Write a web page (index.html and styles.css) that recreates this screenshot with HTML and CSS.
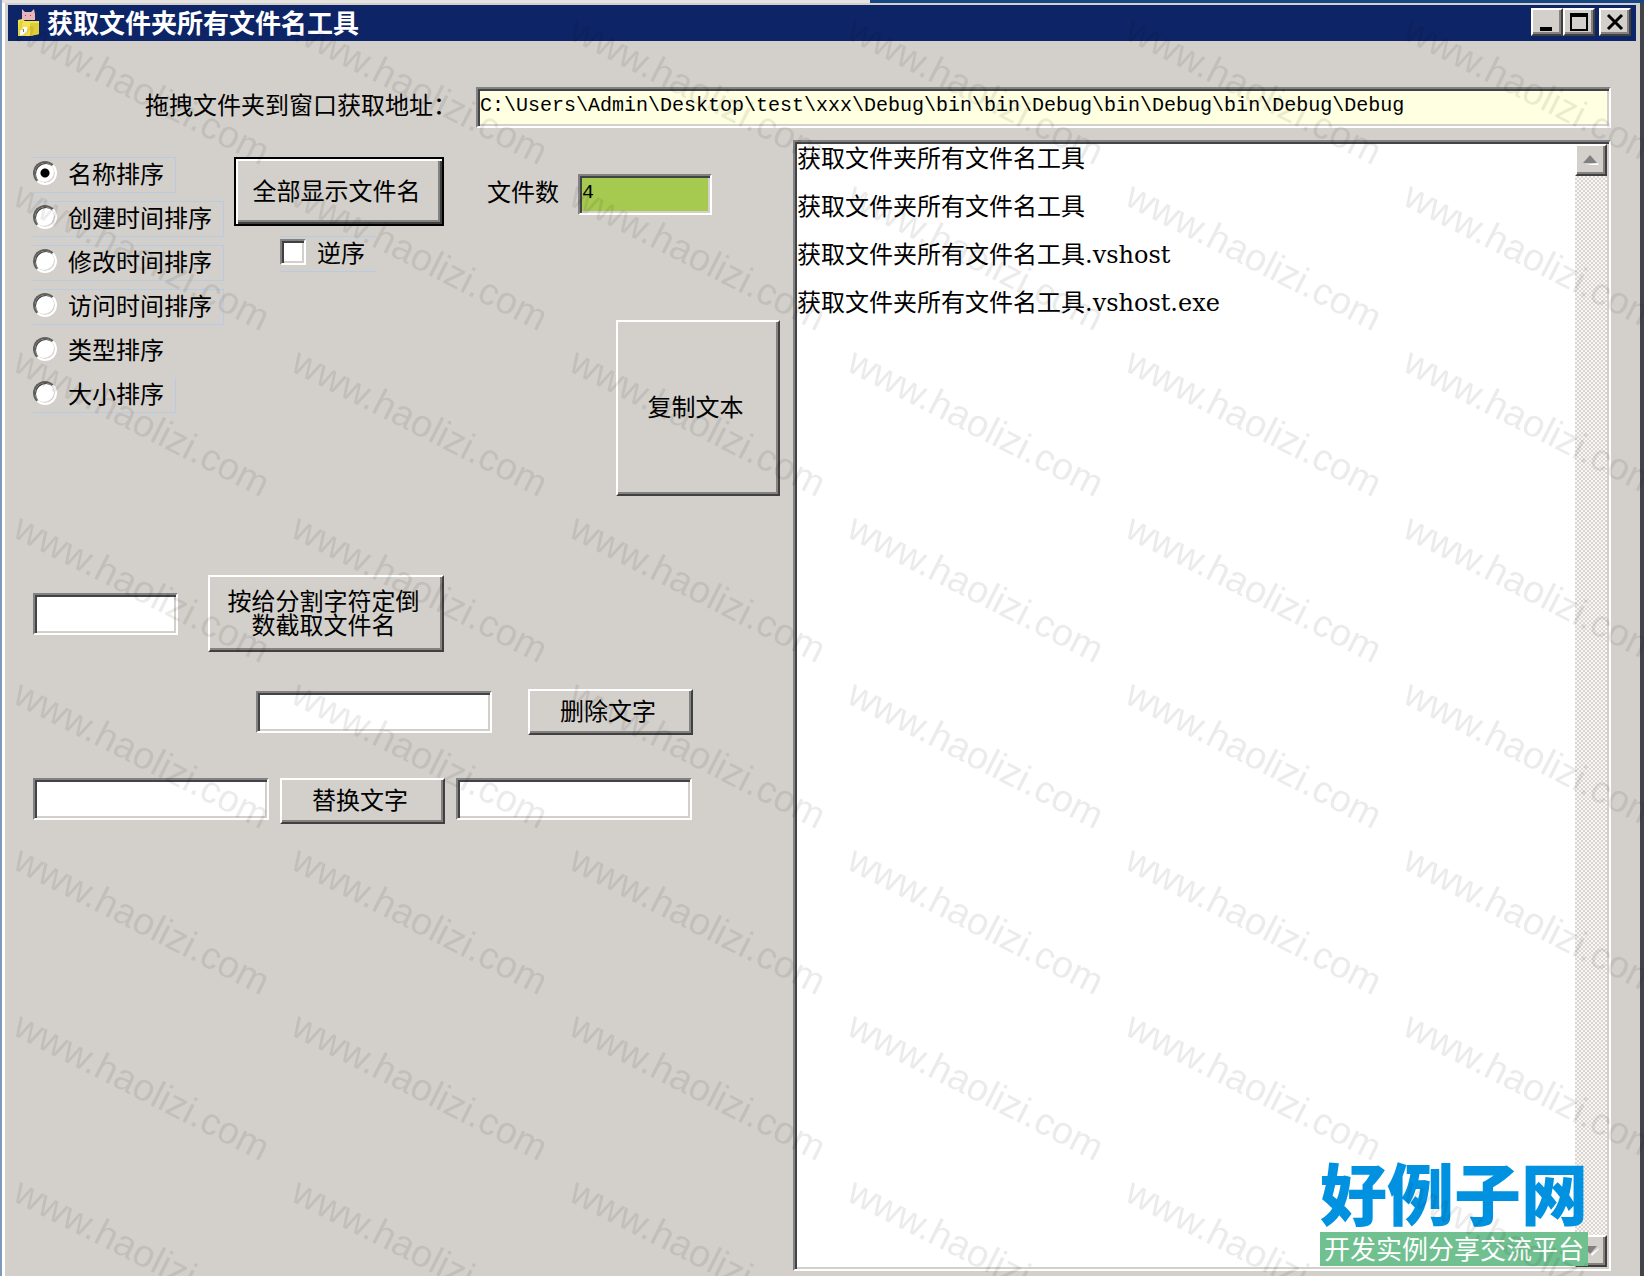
FILE: index.html
```html
<!DOCTYPE html>
<html lang="zh-CN">
<head>
    <meta charset="UTF-8">
    <meta name="viewport" content="width=device-width, initial-scale=1.0">
    <title>获取文件夹所有文件名工具</title>
    <link rel="stylesheet" href="styles.css">
</head>
<body>
    <div class="window">
        <header class="titlebar">
            <svg class="app-icon" width="22" height="28" viewBox="0 0 22 28">
                <path d="M4 0l3 3h6l3-3 1 5v6H4z" fill="#e9b5bd"/>
                <path d="M7 6h1v1H7zM12 6h1v1h-1z" fill="#8c4a5c"/>
                <path d="M0 11l4-1 3 2h14v13l-9 2H0z" fill="#f3e34c"/>
                <path d="M12 14h9v11l-9 2z" fill="#e2cc35"/>
                <path d="M2 21h3v-3h4v5l-4 3H2z" fill="#fff"/>
                <path d="M5 20h1v3H5z" fill="#77808c"/>
            </svg>
            <h1>获取文件夹所有文件名工具</h1>
            <div class="title-buttons">
                <button class="raised" aria-label="最小化">
                    <svg width="26" height="22" viewBox="0 0 26 22"><path d="M6 16h12v4H6z"/></svg>
                </button>
                <button class="raised" aria-label="最大化">
                    <svg width="26" height="22" viewBox="0 0 26 22"><path d="M4 2h18v18H4zM6 6v12h14V6z" fill-rule="evenodd"/></svg>
                </button>
                <button class="raised close" aria-label="关闭">
                    <svg width="26" height="22" viewBox="0 0 26 22"><path d="M6 4l14 14M20 4L6 18" stroke="#000" stroke-width="3"/></svg>
                </button>
            </div>
        </header>

        <main>
            <div class="path-row">
                <label for="path">拖拽文件夹到窗口获取地址：</label>
                <input type="text" id="path" class="sunken" value="C:\Users\Admin\Desktop\test\xxx\Debug\bin\bin\Debug\bin\Debug\bin\Debug\Debug">
            </div>

            <div class="content">
                <section class="tools">
                    <div class="options">
                        <div class="sort-list">
                            <label class="marked short"><input type="radio" name="sort" checked>名称排序</label>
                            <label class="marked"><input type="radio" name="sort">创建时间排序</label>
                            <label class="marked"><input type="radio" name="sort">修改时间排序</label>
                            <label class="marked"><input type="radio" name="sort">访问时间排序</label>
                            <label><input type="radio" name="sort">类型排序</label>
                            <label class="marked short open-top"><input type="radio" name="sort">大小排序</label>
                        </div>
                        <div class="show">
                            <button class="raised default">全部显示文件名</button>
                            <label class="reverse"><input type="checkbox">逆序</label>
                        </div>
                        <div class="result">
                            <div class="count-row">
                                <label for="count">文件数</label>
                                <input type="text" id="count" class="sunken" value="4">
                            </div>
                            <button class="raised copy">复制文本</button>
                        </div>
                    </div>

                    <div class="split-row">
                        <input type="text" class="sunken" aria-label="分割字符">
                        <button class="raised">按给分割字符定倒<br>数截取文件名</button>
                    </div>

                    <div class="delete-row">
                        <input type="text" class="sunken" aria-label="要删除的文字">
                        <button class="raised">删除文字</button>
                    </div>

                    <div class="replace-row">
                        <input type="text" class="sunken" aria-label="原文字">
                        <button class="raised">替换文字</button>
                        <input type="text" class="sunken" aria-label="新文字">
                    </div>
                </section>

                <section class="file-list sunken">
                    <textarea aria-label="文件名" spellcheck="false">获取文件夹所有文件名工具

获取文件夹所有文件名工具

获取文件夹所有文件名工具.vshost

获取文件夹所有文件名工具.vshost.exe</textarea>
                    <div class="scrollbar">
                        <button class="raised" aria-label="向上滚动">
                            <svg width="16" height="10" viewBox="0 0 16 10"><path d="M3 10h13l-2-2z" fill="#fff"/><path d="M0 8l7-8 7 8z" fill="#808080"/></svg>
                        </button>
                        <button class="raised" aria-label="向下滚动">
                            <svg width="16" height="10" viewBox="0 0 16 10"><path d="M16 2v1L9 10 8 8z" fill="#fff"/><path d="M0 0h14L7 8z" fill="#808080"/></svg>
                        </button>
                    </div>
                </section>
            </div>
        </main>
    </div>

    <div class="site-logo">
        <strong>好例子网</strong>
        <span>开发实例分享交流平台</span>
    </div>

    <svg class="watermark" width="100%" height="100%" aria-hidden="true">
        <defs>
            <pattern id="mark" width="278" height="166" y="16" patternUnits="userSpaceOnUse">
                <text x="11" y="22" transform="rotate(27 11 22)">www.haolizi.com</text>
            </pattern>
        </defs>
        <rect width="100%" height="100%" fill="url(#mark)"/>
    </svg>
</body>
</html>
```

FILE: styles.css
```css
* {
    box-sizing: border-box;
}
body {
    margin: 0;
    height: 100vh;
    padding: 3px 0 0 2px;
    overflow: hidden;
    background: linear-gradient(90deg, #7a9ac0 2px, #e4e3df 2px, #e4e3df 870px, #174684 870px);
    font-family: "Noto Sans CJK SC", sans-serif;
    font-size: 24px;
    color: #000;
    position: relative;
}
button, input, textarea {
    font: inherit;
    color: inherit;
    margin: 0;
    border-radius: 0;
}
.window {
    display: flex;
    flex-direction: column;
    height: 100%;
    padding: 2px 4px 0 3px;
    background: #d3cfca;
    border-left: 3px solid #fff;
    border-right: 4px solid #404448;
}
.raised {
    display: flex;
    align-items: center;
    justify-content: center;
    padding: 0;
    background: #d3cfca;
    border: 2px solid;
    border-color: #fff #404040 #404040 #fff;
    box-shadow: inset -2px -2px #848280;
    line-height: 24px;
}
.tools .raised {
    padding: 0 5px 4px 0;
}
.sunken {
    border: 2px solid;
    border-color: #848280 #fff #fff #848280;
    box-shadow: inset 2px 2px #404448, inset -2px -2px #d3cfca;
    background: #fff;
}

/* title bar */
.titlebar {
    display: flex;
    align-items: center;
    height: 36px;
    padding: 0 5px 0 10px;
    background: #0d2466;
    color: #fff;
}
.titlebar h1 {
    flex: 1;
    margin: 0 0 0 7px;
    padding-bottom: 2px;
    font-size: 26px;
    line-height: 34px;
}
.title-buttons {
    display: flex;
    padding-bottom: 2px;
}
.title-buttons button {
    width: 32px;
    height: 28px;
}
.title-buttons .close {
    margin-left: 4px;
}

/* client area */
main {
    flex: 1;
    display: flex;
    flex-direction: column;
    min-height: 0;
    padding: 46px 25px 5px 25px;
}
.path-row {
    display: flex;
    align-items: center;
    gap: 19px;
    padding-left: 112px;
    margin-bottom: 12px;
}
.path-row label, .count-row label {
    padding-bottom: 7px;
    line-height: 32px;
}
#path, #count {
    height: 41px;
    padding: 0 2px 4px;
    font-family: "Liberation Mono", monospace;
    font-size: 20px;
}
#path {
    flex: 1;
    min-width: 0;
    background: #ffffe1;
}
.content {
    flex: 1;
    display: flex;
    gap: 13px;
    min-height: 0;
}
.tools {
    flex: none;
    width: 747px;
    padding-top: 17px;
}
.options {
    display: flex;
}

/* sort order */
.sort-list {
    display: flex;
    flex-direction: column;
    align-items: flex-start;
    gap: 8px;
    width: 201px;
}
.sort-list label, .reverse {
    display: flex;
    align-items: center;
    height: 36px;
    padding-bottom: 5px;
    border: 1px solid transparent;
    border-left: 0;
    line-height: 32px;
    white-space: nowrap;
}
.sort-list label {
    width: 191px;
}
.sort-list .short {
    width: 143px;
}
.sort-list .marked {
    border-color: #b8cbe0;
}
.sort-list .open-top {
    border-top-color: transparent;
}
input[type="radio"], input[type="checkbox"] {
    appearance: none;
    flex: none;
    width: 24px;
    height: 24px;
    background: #fff;
}
input[type="radio"] {
    margin-right: 11px;
    border: 2px solid;
    border-color: #606060 #fff #fff #606060;
    border-radius: 50%;
    box-shadow: inset 1px 1px #404040, inset -1px -1px #d3cfca;
}
input[type="radio"]:checked {
    background: radial-gradient(circle, #000 4px, #fff 5px);
}
input[type="checkbox"] {
    width: 26px;
    height: 26px;
    margin-right: 11px;
    border: 2px solid;
    border-color: #848280 #fff #fff #848280;
    box-shadow: inset 2px 2px #404040, inset -2px -2px #d3cfca;
}

.show {
    width: 210px;
}
.default {
    width: 100%;
    height: 69px;
    margin-bottom: 10px;
    border-color: #000;
    box-shadow: inset 2px 2px #fff, inset -2px -2px #404040, inset -4px -4px #848280;
}
.reverse {
    width: 96px;
    margin-left: 46px;
    border-color: #b8cbe0 transparent;
}
.result {
    flex: 1;
    display: flex;
    flex-direction: column;
    align-items: flex-end;
    gap: 105px;
    padding: 17px 0 0 43px;
}
.count-row {
    display: flex;
    align-items: center;
    justify-content: space-between;
    align-self: stretch;
    padding-right: 68px;
}
#count {
    width: 134px;
    background: #a6ca50;
}
.copy {
    width: 164px;
    height: 176px;
}

/* text tools */
.split-row, .delete-row, .replace-row {
    display: flex;
    align-items: center;
}
.tools .sunken {
    height: 42px;
}
.split-row {
    gap: 30px;
    margin-top: 79px;
}
.split-row input {
    width: 145px;
}
.split-row button {
    width: 236px;
    height: 77px;
}
.delete-row {
    gap: 36px;
    margin-top: 37px;
    padding-left: 223px;
}
.replace-row {
    align-items: flex-start;
    gap: 11px;
    margin-top: 43px;
}
.delete-row input, .replace-row input {
    width: 236px;
}
.delete-row button, .replace-row button {
    width: 165px;
    height: 46px;
}

/* file names */
.file-list {
    flex: 1;
    display: flex;
    min-width: 0;
    padding: 2px;
}
.file-list textarea {
    flex: 1;
    min-width: 0;
    padding: 3px 0;
    border: 0;
    outline: 0;
    resize: none;
    overflow: hidden;
    background: none;
    font-family: "DejaVu Serif", "Noto Sans CJK SC", serif;
    line-height: 24px;
}
.scrollbar {
    display: flex;
    flex-direction: column;
    justify-content: space-between;
    width: 32px;
    background: repeating-conic-gradient(#d9d5d0 0 25%, #f8f7f5 0 50%) 0 0 / 4px 4px;
}
.scrollbar button {
    height: 32px;
}

/* overlays */
.site-logo {
    position: absolute;
    right: 56px;
    bottom: 10px;
    display: flex;
    flex-direction: column;
    color: #0092e0;
}
.site-logo strong {
    padding-bottom: 6px;
    font-size: 67px;
    font-weight: 900;
    line-height: 70px;
}
.site-logo span {
    height: 34px;
    background: #70c090;
    color: #fff;
    font-size: 26px;
    line-height: 32px;
    text-align: center;
}
.watermark {
    position: absolute;
    top: 0;
    left: 0;
    pointer-events: none;
}
.watermark text {
    font-family: "Liberation Sans", Arial, sans-serif;
    font-size: 38px;
    fill: #000;
    fill-opacity: 0.08;
}
```
